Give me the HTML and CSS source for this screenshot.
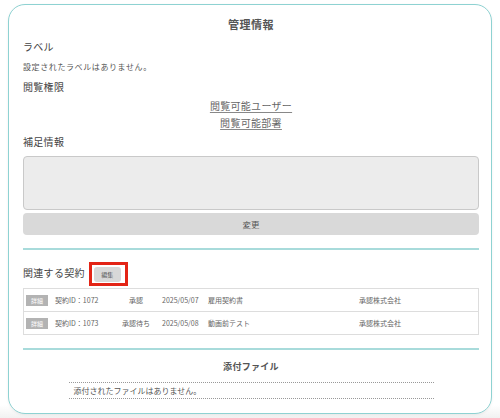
FILE: index.html
```html
<!DOCTYPE html>
<html lang="ja">
<head>
<meta charset="utf-8">
<link rel="stylesheet" href="styles.css">
</head>
<body>
<div class="card">
  <div class="title">管理情報</div>
  <div class="heading h-label">ラベル</div>
  <div class="note">設定されたラベルはありません。</div>
  <div class="heading h-perm">閲覧権限</div>
  <div class="links">
    <a href="#">閲覧可能ユーザー</a>
    <a href="#">閲覧可能部署</a>
  </div>
  <div class="heading h-extra">補足情報</div>
  <div class="textarea"></div>
  <div class="change-btn">変更</div>
  <div class="rule rule-1"></div>
  <div class="related">
    <span class="related-title">関連する契約</span>
    <span class="highlight"><span class="edit-btn">編集</span></span>
  </div>
  <div class="table">
    <div class="row">
      <div class="c1"><span class="badge">詳細</span></div>
      <div class="c2">契約ID：1072</div>
      <div class="c3">承認</div>
      <div class="c4">2025/05/07</div>
      <div class="c5">雇用契約書</div>
      <div class="c6">承認株式会社</div>
    </div>
    <div class="row">
      <div class="c1"><span class="badge">詳細</span></div>
      <div class="c2">契約ID：1073</div>
      <div class="c3">承認待ち</div>
      <div class="c4">2025/05/08</div>
      <div class="c5">動画前テスト</div>
      <div class="c6">承認株式会社</div>
    </div>
  </div>
  <div class="rule rule-2"></div>
  <div class="files-title">添付ファイル</div>
  <div class="files-box">添付されたファイルはありません。</div>
</div>
</body>
</html>
```

FILE: styles.css
```css
html, body {
  margin: 0;
  padding: 0;
  background: #ffffff;
}
body {
  font-family: "Noto Sans CJK JP", "Noto Sans", "Liberation Sans", sans-serif;
  color: #444;
  padding-top: 4px;
  height: 418px;
  box-sizing: border-box;
  background: linear-gradient(#ffffff 0, #ffffff 405px, #f1f1f1 418px);
}
.card {
  margin: 0 8px 0 8px;
  width: 484px;
  box-sizing: border-box;
  height: 410px;
  border: 1px solid #8ed2d2;
  border-radius: 17px;
  background: #fff;
  padding: 11px 12px 0 14px;
  display: flex;
  flex-direction: column;
  box-shadow: 0 1px 3px rgba(0,0,0,0.06);
}
.title {
  text-align: center;
  font-size: 11px;
  font-weight: bold;
  letter-spacing: 0.5px;
  line-height: 16px;
  color: #555;
}
.heading {
  font-size: 10px;
  letter-spacing: 0.3px;
  line-height: 14px;
  color: #444;
}
.h-label { margin-top: 8px; }
.h-perm { margin-top: 7px; }
.h-extra { margin-top: 4px; }
.note {
  margin-top: 7px;
  font-size: 8px;
  letter-spacing: 0.6px;
  line-height: 12px;
  color: #555;
}
.links {
  margin-top: 3px;
  display: flex;
  flex-direction: column;
  align-items: center;
  font-size: 10px;
  letter-spacing: 0.3px;
  line-height: 17px;
}
.links a {
  color: #666;
  text-decoration: underline;
  text-decoration-color: #888;
  text-underline-offset: 2px;
}
.textarea {
  margin-top: 7px;
  height: 54px;
  box-sizing: border-box;
  background: #ececec;
  border: 1px solid #c9c9c9;
  border-radius: 4px;
}
.change-btn {
  margin-top: 3px;
  height: 22px;
  background: #d9d9d9;
  border-radius: 4px;
  display: flex;
  align-items: center;
  justify-content: center;
  font-size: 8.5px;
  color: #555;
}
.rule {
  height: 2px;
  background: #a8dbdb;
}
.rule-1 { margin-top: 13px; }
.rule-2 { margin-top: 13px; }
.related {
  margin-top: 12px;
  height: 24px;
  display: flex;
  align-items: center;
}
.related-title {
  font-size: 10px;
  letter-spacing: 0.3px;
  color: #444;
  line-height: 14px;
  margin-top: -2px;
}
.highlight {
  margin-left: 4px;
  border: 3px solid #e32416;
  padding: 2px 4px 1px 2px;
  display: inline-flex;
}
.edit-btn {
  width: 27px;
  height: 15px;
  border-radius: 3px;
  background: #d8d8d8;
  display: inline-flex;
  align-items: center;
  justify-content: center;
  font-size: 6px;
  color: #555;
}
.table {
  margin-top: 2px;
  border: 1px solid #dddddd;
}
.row {
  height: 22px;
  display: grid;
  grid-template-columns: 28px 61px 42px 48px 149px 1fr;
  align-items: center;
  font-size: 7px;
  color: #666;
  padding-left: 2px;
}
.row + .row {
  border-top: 1px solid #dddddd;
}
.badge {
  display: inline-flex;
  align-items: center;
  justify-content: center;
  width: 22px;
  height: 11px;
  background: #b3b3b3;
  color: #fff;
  font-size: 6px;
}
.c2 { padding-left: 1px; }
.c3 { text-align: center; }
.c4 { padding-left: 5px; }
.c5 { padding-left: 3px; }
.c6 { padding-left: 5px; }
.files-title {
  margin-top: 10px;
  text-align: center;
  font-size: 9px;
  font-weight: bold;
  letter-spacing: 0.3px;
  line-height: 14px;
  color: #555;
}
.files-box {
  margin: 8px auto 0;
  width: 365px;
  box-sizing: border-box;
  border-top: 1px dotted #999;
  border-bottom: 1px dotted #999;
  height: 17px;
  padding-left: 5px;
  display: flex;
  align-items: center;
  font-size: 8px;
  color: #555;
}
```
